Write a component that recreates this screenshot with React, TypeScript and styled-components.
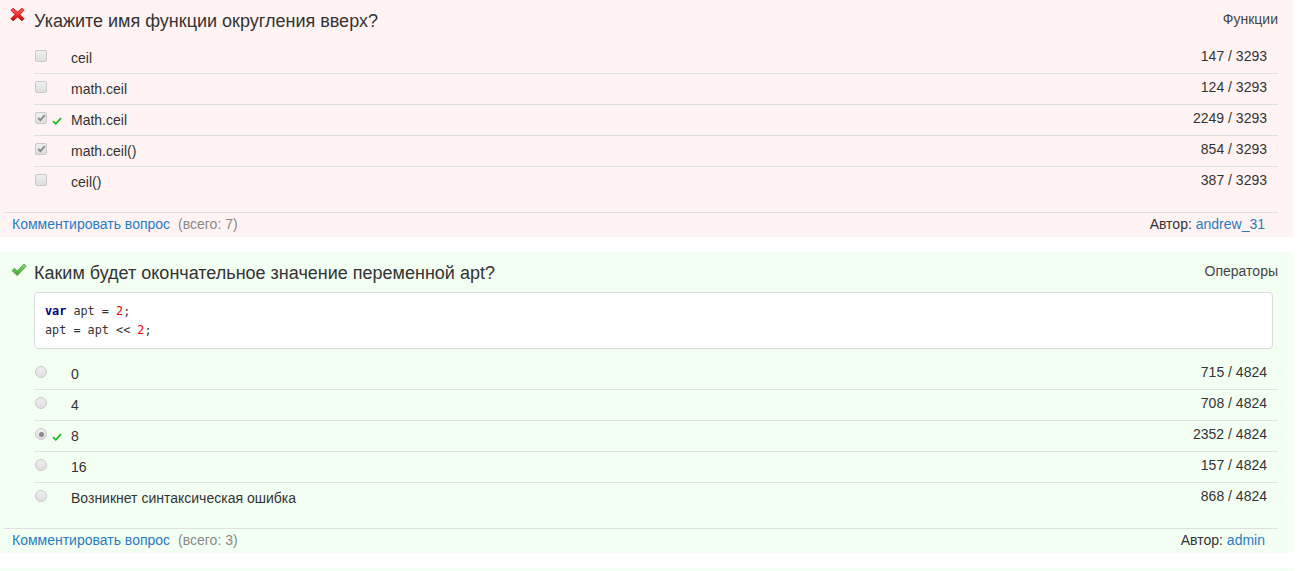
import React from 'react';
import styled, { createGlobalStyle } from 'styled-components';

const GlobalStyle = createGlobalStyle`
  body {
    margin: 0;
    background: #fff;
    font-family: "Liberation Sans", Arial, sans-serif;
    color: #333;
  }
`;

type Option = {
  text: string;
  votes: number;
  checked?: boolean;
  correct?: boolean;
};

type Question = {
  title: string;
  category: string;
  status: 'wrong' | 'right';
  multi: boolean;
  code?: React.ReactNode;
  options: Option[];
  total: number;
  comments: number;
  author: string;
};

const Page = styled.div`
  display: flex;
  flex-direction: column;
  gap: 15px;
  width: 1293px;
`;

const Card = styled.div<{ $status: 'wrong' | 'right' }>`
  background: ${(p) => (p.$status === 'wrong' ? '#fff4f3' : '#f4fff4')};
  display: flex;
  flex-direction: column;
`;

// next question, only its top edge is in view
const NextCard = styled.div`
  background: #f4fff4;
  height: 40px;
`;

const Header = styled.div`
  display: flex;
  align-items: flex-start;
  padding: 11px 15px 0 10px;
  margin-bottom: 9px;
`;

const StatusIcon = styled.span<{ $status: 'wrong' | 'right' }>`
  width: 24px;
  height: 20px;
  flex: none;
  box-sizing: border-box;
  display: flex;
  align-items: ${(p) => (p.$status === 'wrong' ? 'flex-start' : 'center')};
  margin-top: ${(p) => (p.$status === 'wrong' ? '-4px' : '-3px')};
  padding-left: ${(p) => (p.$status === 'wrong' ? '0' : '1px')};
`;

const Title = styled.h3`
  margin: 0;
  font-size: 18px;
  line-height: 20px;
  font-weight: normal;
  color: #333;
  flex: 1;
`;

const Category = styled.span`
  font-size: 14px;
  line-height: 17px;
  color: #444;
`;

const Code = styled.pre`
  margin: 0 20px 7px 34px;
  padding: 9px 10px 8px;
  background: #fff;
  border: 1px solid #dcdcdc;
  border-radius: 4px;
  font-family: "DejaVu Sans Mono", "Liberation Mono", monospace;
  font-size: 11.8px;
  line-height: 19px;
  color: #333;
`;

const Kw = styled.span`
  color: #000080;
  font-weight: bold;
`;

const Num = styled.span`
  color: #ee0000;
`;

const Options = styled.ul`
  list-style: none;
  margin: 3px 15px 15px 34px;
  padding: 0;
`;

const Row = styled.li`
  display: flex;
  align-items: flex-start;
  height: 30px;
  font-size: 14px;
  line-height: 30px;
  & + & {
    border-top: 1px solid #e0e0e0;
  }
`;

const Box = styled.span<{ $round: boolean }>`
  width: 12px;
  height: 12px;
  margin: 7px 0 0 1px;
  flex: none;
  box-sizing: border-box;
  border: 1px solid #c9c9c9;
  border-radius: ${(p) => (p.$round ? '50%' : '2px')};
  background: linear-gradient(#f0f0f0, #dedede);
  display: flex;
  align-items: center;
  justify-content: center;
`;

const Dot = styled.span`
  width: 5px;
  height: 5px;
  border-radius: 50%;
  background: #8a8a8a;
`;

const MarkSlot = styled.span`
  width: 24px;
  flex: none;
  padding-left: 5px;
  box-sizing: border-box;
  display: flex;
  align-items: center;
  height: 30px;
  margin-top: 1px;
`;

const OptionText = styled.span`
  flex: 1;
`;

const Votes = styled.span`
  padding-right: 11px;
  margin-top: -2px;
`;

const Footer = styled.div`
  display: flex;
  margin: 0 15px 0 4px;
  padding: 2px 13px 4px 8px;
  border-top: 1px solid #e0e0e0;
  font-size: 14px;
  line-height: 18px;
`;

const Link = styled.a`
  color: #2a7ac0;
  text-decoration: none;
`;

const Muted = styled.span`
  color: #888;
  margin-left: 8px;
`;

const Author = styled.span`
  margin-left: auto;
  color: #333;
`;

const CrossIcon = () => (
  <svg width="15" height="15" viewBox="0 0 15 15">
    <defs>
      <linearGradient id="crossGrad" x1="0" y1="0" x2="0" y2="1">
        <stop offset="0" stopColor="#ff6a6a" />
        <stop offset="1" stopColor="#d40000" />
      </linearGradient>
    </defs>
    <path
      d="M3 1.2 L7.5 5 L12 1.2 L14 3.2 L10 7.5 L14 11.8 L12 13.8 L7.5 10 L3 13.8 L1 11.8 L5 7.5 L1 3.2 Z"
      fill="url(#crossGrad)"
      stroke="#b30000"
      strokeWidth="0.8"
      strokeLinejoin="round"
    />
  </svg>
);

const CheckIcon = () => (
  <svg width="16" height="14" viewBox="0 0 16 14">
    <defs>
      <linearGradient id="checkGrad" x1="0" y1="0" x2="0" y2="1">
        <stop offset="0" stopColor="#8be07a" />
        <stop offset="1" stopColor="#3f9f2c" />
      </linearGradient>
    </defs>
    <path
      d="M1 7.5 L3.5 5.2 L6.2 8 L13 1 L15.2 3.2 L6.2 12.6 Z"
      fill="url(#checkGrad)"
      stroke="#3b8f2a"
      strokeWidth="0.7"
      strokeLinejoin="round"
    />
  </svg>
);

const SmallCheck = () => (
  <svg width="10" height="8" viewBox="0 0 10 8">
    <path d="M1 4.2 L3.8 6.8 L9 1.2" fill="none" stroke="#1fb51f" strokeWidth="1.7" />
  </svg>
);

const BoxCheck = () => (
  <svg width="9" height="8" viewBox="0 0 9 8">
    <path d="M1.2 4 L3.4 6.2 L7.8 1.2" fill="none" stroke="#8a8a8a" strokeWidth="1.8" />
  </svg>
);

const questions: Question[] = [
  {
    title: 'Укажите имя функции округления вверх?',
    category: 'Функции',
    status: 'wrong',
    multi: true,
    options: [
      { text: 'ceil', votes: 147 },
      { text: 'math.ceil', votes: 124 },
      { text: 'Math.ceil', votes: 2249, checked: true, correct: true },
      { text: 'math.ceil()', votes: 854, checked: true },
      { text: 'ceil()', votes: 387 },
    ],
    total: 3293,
    comments: 7,
    author: 'andrew_31',
  },
  {
    title: 'Каким будет окончательное значение переменной apt?',
    category: 'Операторы',
    status: 'right',
    multi: false,
    code: (
      <>
        <Kw>var</Kw> apt = <Num>2</Num>;{'\n'}apt = apt &lt;&lt; <Num>2</Num>;
      </>
    ),
    options: [
      { text: '0', votes: 715 },
      { text: '4', votes: 708 },
      { text: '8', votes: 2352, checked: true, correct: true },
      { text: '16', votes: 157 },
      { text: 'Возникнет синтаксическая ошибка', votes: 868 },
    ],
    total: 4824,
    comments: 3,
    author: 'admin',
  },
];

function QuestionCard({ q }: { q: Question }) {
  return (
    <Card $status={q.status}>
      <Header>
        <StatusIcon $status={q.status}>
          {q.status === 'wrong' ? <CrossIcon /> : <CheckIcon />}
        </StatusIcon>
        <Title>{q.title}</Title>
        <Category>{q.category}</Category>
      </Header>
      {q.code && <Code>{q.code}</Code>}
      <Options>
        {q.options.map((o) => (
          <Row key={o.text}>
            <Box $round={!q.multi}>
              {o.checked && (q.multi ? <BoxCheck /> : <Dot />)}
            </Box>
            <MarkSlot>{o.correct && <SmallCheck />}</MarkSlot>
            <OptionText>{o.text}</OptionText>
            <Votes>
              {o.votes} / {q.total}
            </Votes>
          </Row>
        ))}
      </Options>
      <Footer>
        <Link href="#">Комментировать вопрос</Link>
        <Muted>(всего: {q.comments})</Muted>
        <Author>
          Автор: <Link href="#">{q.author}</Link>
        </Author>
      </Footer>
    </Card>
  );
}

export default function App() {
  return (
    <>
      <GlobalStyle />
      <Page>
        {questions.map((q) => (
          <QuestionCard key={q.title} q={q} />
        ))}
        <NextCard />
      </Page>
    </>
  );
}
